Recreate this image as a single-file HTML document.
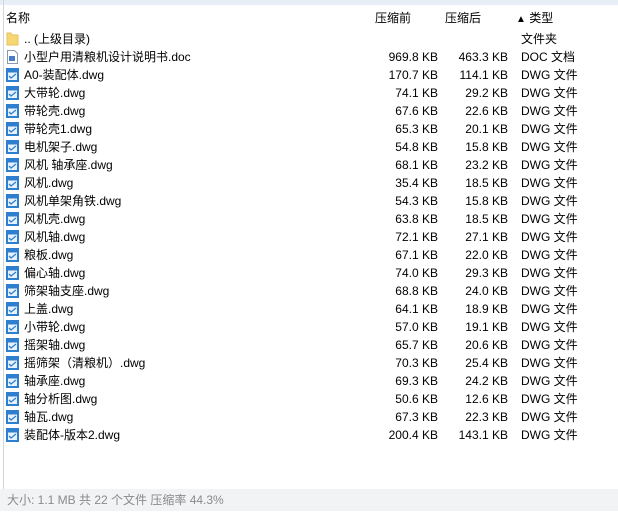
<!DOCTYPE html><html><head><meta charset="utf-8"><style>
body{margin:0;width:618px;height:513px;background:#fff;position:relative;overflow:hidden;font-family:"Liberation Sans","Noto Sans CJK SC",sans-serif;font-size:12px;color:#000}
.top{position:absolute;left:0;top:0;width:618px;height:5px;background:#e8eef5}
.lb{position:absolute;left:3px;top:0;width:1px;height:490px;background:#cfd6de}
.hd{position:absolute;top:9px;font-size:12px}
.r{position:absolute;left:0;width:618px;height:18px;line-height:18px}
.r span{position:absolute;white-space:nowrap}
.n{left:24px}.a{right:180px;text-align:right}.b{right:110px;text-align:right}.t{left:521px}
.ic{position:absolute;left:6px;top:2px;width:13px;height:14px}
.sb{position:absolute;left:0;top:489px;width:618px;height:22px;background:#f2f3f5;color:#8a8a8a;line-height:22px}
</style></head><body>
<div class="top"></div><div class="lb"></div>
<div class="hd" style="left:6px">名称</div>
<div class="hd" style="left:375px">压缩前</div>
<div class="hd" style="left:445px">压缩后</div>
<div class="hd" style="left:516px"><span style="font-size:10px">▲</span> 类型</div>
<div class="r" style="top:30px"><svg class="ic" viewBox="0 0 13 14"><path d="M1 1h4l1 2h6v10H1z" fill="#f7d774" stroke="#e6c25c"/></svg><span class="n">.. (上级目录)</span><span class="t">文件夹</span></div>
<div class="r" style="top:48px"><svg class="ic" viewBox="0 0 13 14"><path d="M1.5 .5h7l3 3v10h-10z" fill="#fff" stroke="#8a9ab0"/><rect x="3" y="6" width="6" height="5" fill="#4a7cc4"/></svg><span class="n">小型户用清粮机设计说明书.doc</span><span class="a">969.8 KB</span><span class="b">463.3 KB</span><span class="t">DOC 文档</span></div>
<div id="rows"></div>
<script>
var d=[["A0-装配体.dwg","170.7","114.1"],["大带轮.dwg","74.1","29.2"],["带轮壳.dwg","67.6","22.6"],["带轮壳1.dwg","65.3","20.1"],["电机架子.dwg","54.8","15.8"],["风机 轴承座.dwg","68.1","23.2"],["风机.dwg","35.4","18.5"],["风机单架角铁.dwg","54.3","15.8"],["风机壳.dwg","63.8","18.5"],["风机轴.dwg","72.1","27.1"],["粮板.dwg","67.1","22.0"],["偏心轴.dwg","74.0","29.3"],["筛架轴支座.dwg","68.8","24.0"],["上盖.dwg","64.1","18.9"],["小带轮.dwg","57.0","19.1"],["摇架轴.dwg","65.7","20.6"],["摇筛架（清粮机）.dwg","70.3","25.4"],["轴承座.dwg","69.3","24.2"],["轴分析图.dwg","50.6","12.6"],["轴瓦.dwg","67.3","22.3"],["装配体-版本2.dwg","200.4","143.1"]];
var h="";d.forEach(function(x,i){h+='<div class="r" style="top:'+(66+i*18)+'px"><svg class="ic" viewBox="0 0 13 14"><rect x="0" y="0" width="13" height="14" fill="#2f7fd0"/><rect x="2" y="3" width="9" height="9" fill="#e8f2fc"/><rect x="2" y="3" width="9" height="1.5" fill="#2f7fd0"/><path d="M3 8l2 2 5-4" fill="none" stroke="#2f7fd0" stroke-width="1.3"/></svg><span class="n">'+x[0]+'</span><span class="a">'+x[1]+' KB</span><span class="b">'+x[2]+' KB</span><span class="t">DWG 文件</span></div>'});
document.getElementById("rows").innerHTML=h;
</script>
<div class="sb"><span style="margin-left:7px">大小: 1.1 MB 共 22 个文件 压缩率 44.3%</span></div>
</body></html>
